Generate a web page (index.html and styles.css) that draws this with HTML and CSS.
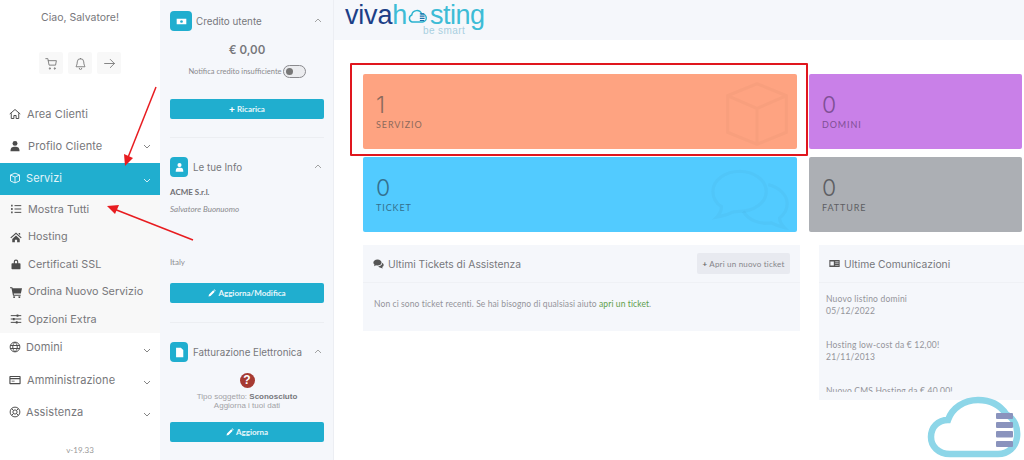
FILE: index.html
```html
<!DOCTYPE html>
<html lang="it">
<head>
<meta charset="utf-8">
<title>Viva Hosting - Area Clienti</title>
<link rel="stylesheet" href="styles.css">
</head>
<body>
<div class="app">
  <nav class="sidebar">
    <div class="hello">Ciao, Salvatore!</div>
    <div class="tools">
      <span class="tool"><svg viewBox="0 0 16 16" class="ic-t"><path d="M1 2h2.500l1.500 8h8l1-5.500H4M6 13.500a.8.800 0 1 0 .01 0M12 13.500a.8.800 0 1 0 .01 0"/></svg></span>
      <span class="tool"><svg viewBox="0 0 16 16" class="ic-t"><path d="M8 2a4 4 0 0 0-4 4c0 4-1.500 5-1.500 6h11c0-1-1.500-2-1.500-6a4 4 0 0 0-4-4zM6.500 14a1.500 1.500 0 0 0 3 0"/></svg></span>
      <span class="tool"><svg viewBox="0 0 16 16" class="ic-t"><path d="M2 8h12M9 3l5 5-5 5"/></svg></span>
    </div>
    <ul class="menu">
      <li class="item"><svg viewBox="0 0 16 16" class="ic-l"><path d="M1 8l7-6 7 6M3 7v7h3.500v-4h3v4H13V7"/></svg><span>Area Clienti</span></li>
      <li class="item profile"><svg viewBox="0 0 16 16" class="ic-s"><circle cx="8" cy="4.500" r="3.300"/><path d="M2 15c0-5 2-6 6-6s6 1 6 6z"/></svg><span class="ind">Profilo Cliente</span><svg viewBox="0 0 10 10" class="chev"><path d="M2 4l3 3 3-3"/></svg></li>
      <li class="item active"><svg viewBox="0 0 16 16" class="ic-l tight"><path d="M8 1.500l6 2.500v8l-6 2.500-6-2.500V4zM2 4l6 2.800L14 4M8 6.800v7.500"/></svg><span>Servizi</span><svg viewBox="0 0 10 10" class="chev"><path d="M2 4l3 3 3-3"/></svg></li>
      <li class="submenu">
        <div class="sub"><svg viewBox="0 0 16 16" class="ic-l"><path d="M6 3.500h9M6 8h9M6 12.500h9"/><path class="thick" d="M1.500 3.500h2M1.500 8h2M1.500 12.500h2"/></svg><span>Mostra Tutti</span></div>
        <div class="sub"><svg viewBox="0 0 16 16" class="ic-s"><path d="M8 2L.500 8.500l1 1L8 4l6.500 5.500 1-1zM3 10.500V15h3.500v-3.500h3V15H13v-4.500L8 6zM11.500 2.500h2v3l-2-1.700z"/></svg><span>Hosting</span></div>
        <div class="sub"><svg viewBox="0 0 16 16" class="ic-s"><path d="M3 7h10a1 1 0 0 1 1 1v6a1 1 0 0 1-1 1H3a1 1 0 0 1-1-1V8a1 1 0 0 1 1-1zM5 7V5a3 3 0 0 1 6 0v2h-1.500V5a1.500 1.500 0 0 0-3 0v2z"/></svg><span>Certificati SSL</span></div>
        <div class="sub"><svg viewBox="0 0 16 16" class="ic-s"><path d="M0 1.500h3l.600 1.500H16l-1.500 7H5l.300 1.500h9V13H4L2 3H0zM5.500 13.500a1.300 1.300 0 1 0 .01 0zM12.500 13.500a1.300 1.300 0 1 0 .01 0z"/></svg><span>Ordina Nuovo Servizio</span></div>
        <div class="sub"><svg viewBox="0 0 16 16" class="ic-l"><path d="M1 3.500h14M1 8h14M1 12.500h14"/><path class="thick" d="M10 2v3M5 6.500v3M9 11v3"/></svg><span>Opzioni Extra</span></div>
      </li>
      <li class="item lower domains"><svg viewBox="0 0 16 16" class="ic-l tight"><circle cx="8" cy="8" r="6.500"/><path d="M1.500 6h13M1.500 10h13M8 1.500c-4 4-4 9 0 13M8 1.500c4 4 4 9 0 13"/></svg><span>Domini</span><svg viewBox="0 0 10 10" class="chev"><path d="M2 4l3 3 3-3"/></svg></li>
      <li class="item lower"><svg viewBox="0 0 16 16" class="ic-s"><path fill-rule="evenodd" d="M1.500 2.500h13a1 1 0 0 1 1 1v9a1 1 0 0 1-1 1h-13a1 1 0 0 1-1-1v-9a1 1 0 0 1 1-1zM2 7v5h12V7zM2 4v1.200h12V4zM3.500 9h4v1h-4z"/></svg><span>Amministrazione</span><svg viewBox="0 0 10 10" class="chev"><path d="M2 4l3 3 3-3"/></svg></li>
      <li class="item lower"><svg viewBox="0 0 16 16" class="ic-l tight"><circle cx="8" cy="8" r="6.500"/><circle cx="8" cy="8" r="2.800"/><path d="M3.500 3.500l2.500 2.500M12.500 3.500L10 6M3.500 12.500L6 10M12.500 12.500L10 10"/></svg><span>Assistenza</span><svg viewBox="0 0 10 10" class="chev"><path d="M2 4l3 3 3-3"/></svg></li>
    </ul>
    <div class="version">v-19.33</div>
  </nav>

  <aside class="panel">
    <section class="block first">
      <div class="block-head">
        <span class="badge"><svg viewBox="0 0 16 16"><path fill-rule="evenodd" d="M1 4h14v8H1zM8 6a2 2 0 1 0 .01 0z"/></svg></span>
        <span class="block-title">Credito utente</span>
        <svg viewBox="0 0 10 10" class="chev up"><path d="M2 6l3-3 3 3"/></svg>
      </div>
      <div class="credit">€ 0,00</div>
      <div class="notify"><span>Notifica credito insufficiente</span><span class="toggle"><i></i></span></div>
      <div class="btn"><b>+</b> Ricarica</div>
    </section>
    <section class="block">
      <div class="block-head">
        <span class="badge narrow"><svg viewBox="0 0 16 16"><circle cx="8" cy="4.500" r="3"/><path d="M2.500 14c0-5 2-5.500 5.500-5.500s5.500.500 5.500 5.500z"/></svg></span>
        <span class="block-title">Le tue Info</span>
        <svg viewBox="0 0 10 10" class="chev up"><path d="M2 6l3-3 3 3"/></svg>
      </div>
      <div class="company">ACME S.r.l.</div>
      <div class="person">Salvatore Buonuomo</div>
      <div class="country">Italy</div>
      <div class="btn"><svg viewBox="0 0 16 16" class="pen"><path d="M1 15l1-4 8.500-8.500 3 3L5 14zM11.500 1.500l1-1 3 3-1 1z"/></svg> Aggiorna/Modifica</div>
    </section>
    <section class="block last">
      <div class="block-head">
        <span class="badge narrow"><svg viewBox="0 0 16 16"><path d="M3 1h7l3.500 3.500V15H3z"/></svg></span>
        <span class="block-title">Fatturazione Elettronica</span>
        <svg viewBox="0 0 10 10" class="chev up"><path d="M2 6l3-3 3 3"/></svg>
      </div>
      <div class="question">?</div>
      <div class="subject">Tipo soggetto: <strong>Sconosciuto</strong><br>Aggiorna i tuoi dati</div>
      <div class="btn"><svg viewBox="0 0 16 16" class="pen"><path d="M1 15l1-4 8.500-8.500 3 3L5 14zM11.500 1.500l1-1 3 3-1 1z"/></svg> Aggiorna</div>
    </section>
  </aside>

  <main class="main">
    <header class="top">
      <div class="logo">
        <span class="viva">viva</span><span class="host">h</span><svg class="logo-cloud" viewBox="0 0 30 20"><path d="M7 17.500a5 5 0 0 1-.500-9.500 7 7 0 0 1 13.500-1.500 5.500 5.500 0 0 1 1.500 11z"/><path class="bars" d="M17.500 6.500h6M17.500 9.500h6.500M17.500 12.500h6.500M17.500 15.500h6"/></svg><span class="host sting">sting</span>
        <span class="smart">be smart</span>
      </div>
    </header>
    <div class="content">
      <div class="stats">
        <div class="stat orange">
          <div class="num">1</div><div class="lbl">SERVIZIO</div>
          <svg class="wm" viewBox="0 0 72 72"><path d="M36 3l32 13v40L36 69 4 56V16zM4 16l32 14 32-14M36 30v39"/></svg>
        </div>
        <div class="stat purple"><div class="num">0</div><div class="lbl">DOMINI</div></div>
        <div class="stat blue">
          <div class="num">0</div><div class="lbl">TICKET</div>
          <svg class="wm wm-chat" viewBox="0 0 84 64"><path d="M30 3c15 0 28 9 28 21s-13 21-28 21c-4 0-7 0-10 2-4 2-9 3-14 4 3-3 5-7 5-11C5 36 2 30 2 24 2 12 15 3 30 3z"/><path d="M60 17c12 3 20 11 20 20 0 6-3 11-8 15 0 4 2 7 5 10-5-1-10-3-14-5-12 2-24-3-29-12"/></svg>
        </div>
        <div class="stat grey"><div class="num">0</div><div class="lbl">FATTURE</div></div>
      </div>
      <div class="lists">
        <section class="card tickets">
          <div class="card-head">
            <svg viewBox="0 0 16 16" class="ic-s"><path d="M6.500 2C3 2 .500 4 .500 6.500c0 1.300.700 2.400 1.700 3.200L1.500 12l3-1.300c.600.200 1.300.300 2 .300 3.500 0 6-2 6-4.500S10 2 6.500 2z"/><path d="M13.500 7c0 3-2.500 5-6 5.500.800 1 2.200 1.500 3.500 1.500l3 1.300-.500-2.300c1.200-.800 2-1.800 2-3 0-1.100-.800-2.200-2-3z"/></svg>
            <span class="card-title">Ultimi Tickets di Assistenza</span>
            <span class="open"><b>+</b> Apri un nuovo ticket</span>
          </div>
          <p class="card-text">Non ci sono ticket recenti. Se hai bisogno di qualsiasi aiuto <a class="link">apri un ticket</a>.</p>
        </section>
        <section class="card news">
          <div class="card-head">
            <svg viewBox="0 0 16 16" class="ic-s"><path fill-rule="evenodd" d="M.500 3h15v10H.500zM2 5v6h5V5zM9 5v1h5V5zM9 7.500v1h5v-1zM9 10v1h5v-1z"/></svg>
            <span class="card-title">Ultime Comunicazioni</span>
          </div>
          <div class="news-list">
            <p>Nuovo listino domini<br>05/12/2022</p>
            <p>Hosting low-cost da € 12,00!<br>21/11/2013</p>
            <p>Nuovo CMS Hosting da € 40,00!</p>
          </div>
        </section>
      </div>
    </div>
  </main>

  <div class="highlight"></div>
  <svg class="arrows" viewBox="0 0 1024 460">
    <path d="M156 87L127 160"/><polygon points="125,166 124,154 133,158"/>
    <path d="M193 240L114 209"/><polygon points="107,206 119,205 115,214"/>
  </svg>
  <svg class="cloud-mark" viewBox="0 0 96 66">
    <path class="outline" d="M24 60C12 60 5 52 5 43 5 33 12 26 22 26 26 14 38 6 52 6 64 6 74 11 80 20 89 25 92 34 91 43 90 53 82 60 72 60z"/>
    <rect x="70" y="19" width="17" height="6" rx="1"/><rect x="70" y="28" width="17" height="6" rx="1"/><rect x="70" y="37" width="17" height="6.500" rx="1"/><rect x="70" y="47" width="17" height="6" rx="1"/>
  </svg>
</div>
</body>
</html>
```
FILE: styles.css
```css
* { box-sizing: border-box; }
html, body { margin: 0; height: 460px; overflow: hidden; background: #fff; }
body { font-family: "Inter", "Liberation Sans", sans-serif; color: #6b6b6f; }
svg { flex: none; display: block; }

.app { position: relative; display: flex; width: 1024px; height: 460px; overflow: hidden; }

/* Sidebar */
.sidebar { width: 160px; flex: none; background: #fff; display: flex; flex-direction: column; }
.hello { text-align: center; font-size: 10.500px; line-height: 14px; padding-top: 11px; color: #77777b; }
.tools { display: flex; justify-content: center; gap: 5px; margin-top: 27px; }
.tool { width: 24px; height: 22px; background: #f8f8f8; border-radius: 2px; display: flex; align-items: center; justify-content: center; }
.ic-t { width: 13px; height: 13px; fill: none; stroke: #777; stroke-width: 1.100; stroke-linecap: round; stroke-linejoin: round; }
.ic-l { width: 12px; height: 12px; margin-right: 6px; fill: none; stroke: #4c4c4c; stroke-width: 1.300; }
.ic-s { width: 12px; height: 12px; margin-right: 6px; fill: #4c4c4c; }
.ic-l.tight { margin-right: 5px; }
.thick { stroke-width: 2.400; }
.menu { list-style: none; margin: 25px 0 0; padding: 0; }
.item { display: flex; align-items: center; height: 32px; padding-left: 9px; padding-right: 8px; font-size: 11px; letter-spacing: .1px; color: #77777b; }
.item span { flex: 1; }
.item span, .item > svg:first-child { margin-bottom: 2px; }
.item .ind { padding-left: 1px; }
.chev { width: 10px; height: 10px; fill: none; stroke: #777; stroke-width: .9; }
.profile .chev { margin-bottom: 2px; }
.active { background: #20aecf; color: #e4f5fa; height: 32px; }
.active .ic-l { stroke: #e4f5fa; }
.active .chev { stroke: #e4f5fa; margin-top: 2px; }
.lower .chev { margin-top: 2px; }
.domains span, .domains > svg:first-child { margin-bottom: 4px; }
.submenu { background: #f8f8f8; padding: 0 0 0 10px; height: 138px; }
.sub { display: flex; align-items: center; height: 27.500px; font-size: 10.800px; color: #77777b; letter-spacing: .05px; }
.sub:first-child { height: 28px; }
.version { text-align: center; font-size: 8px; color: #999; margin-top: 16px; font-family: "Lato", sans-serif; }

/* Panel */
.panel { width: 174px; flex: none; background: #f5f7fb; padding: 0 9px 0 10px; border-right: 1px solid #eceef3; }
.block { border-bottom: 1px solid #eceef2; padding-top: 19px; padding-bottom: 19px; }
.block.first { padding-top: 11px; padding-bottom: 18px; }
.block.last { border: 0; }
.block-head { display: flex; align-items: center; height: 20px; }
.badge { width: 22px; height: 20px; background: #20aecf; border-radius: 4px; display: flex; align-items: center; justify-content: center; margin-right: 4px; }
.badge.narrow { width: 18px; margin-right: 5px; }
.badge svg { width: 11px; height: 11px; fill: #fff; }
.block-title { flex: 1; font-size: 9.800px; color: #77777b; white-space: nowrap; }
.chev.up { stroke: #999; margin-right: 1px; }
.credit { text-align: center; font-size: 11.500px; font-weight: 600; line-height: 14px; margin-top: 12px; color: #77777b; }
.notify { display: flex; justify-content: center; align-items: center; gap: 1px; margin-top: 7px; height: 14px; font-family: "Lato", sans-serif; font-size: 7.500px; color: #8a8a8e; white-space: nowrap; }
.toggle { display: block; width: 23px; height: 13px; border: 1px solid #8a8a8e; border-radius: 7px; padding: 2px; background: #ebecef; }
.toggle i { display: block; width: 7px; height: 7px; border-radius: 50%; background: #777; }
.btn { display: flex; justify-content: center; align-items: center; gap: 2px; height: 20px; background: #20aecf; border-radius: 2px; margin-top: 21px; color: #e8f7fb; font-family: "Lato", sans-serif; font-size: 8px; font-weight: 700; }
.btn b { font-size: 10px; line-height: 1; color: #fff; }
.pen { width: 8px; height: 8px; fill: #fff; }
.company { font-family: "Lato", sans-serif; font-size: 8px; font-weight: 700; color: #6f6f73; margin-top: 10px; line-height: 10px; }
.person { font-family: "Lato", sans-serif; font-size: 8px; font-style: italic; color: #8a8a8e; margin-top: 7px; line-height: 10px; }
.country { font-family: "Lato", sans-serif; font-size: 8px; color: #8f8f93; margin-top: 43px; line-height: 10px; }
.block .country + .btn { margin-top: 16px; }
.question { width: 15px; height: 15px; border-radius: 50%; background: #a63a32; color: #fff; font: 700 12px/15px "Liberation Sans", sans-serif; text-align: center; margin: 11px auto 0; }
.subject { text-align: center; font-family: "Liberation Sans", sans-serif; font-size: 8px; line-height: 9px; color: #a2a2a6; margin-top: 4px; }
.subject strong { color: #77777b; }
.subject + .btn { margin-top: 12px; }

/* Main */
.main { flex: 1; min-width: 0; display: flex; flex-direction: column; }
.top { height: 40px; background: #f5f7fb; flex: none; padding: 0 0 0 11px; }
.logo { position: relative; display: flex; align-items: baseline; width: 145px; font-family: "Liberation Sans", sans-serif; font-size: 27px; line-height: 31px; letter-spacing: -.2px; }
.viva { color: #1c3f87; }
.host { color: #3dbcd6; }
.sting { letter-spacing: -.5px; margin-left: 1px; }
.logo-cloud { width: 22px; height: 15px; align-self: flex-start; margin: 9px 0 0 0; fill: none; stroke: #2ab3cf; stroke-width: 2; }
.logo-cloud .bars { stroke: #1c6fa8; stroke-width: 1.600; }
.smart { position: absolute; left: 78px; top: 25px; font-size: 10px; line-height: 11px; letter-spacing: .4px; color: #a8cfe0; }
.content { padding: 34px 0 0 29px; flex: 1; min-height: 0; display: flex; flex-direction: column; }
.stats { display: grid; grid-template-columns: 434px 213px; gap: 8px 12px; }
.stat { position: relative; height: 75px; border-radius: 2px; padding: 19px 13px 0; overflow: hidden; }
.orange { background: #fea381; color: #8d6a5c; }
.purple { background: #c980e8; color: #7f4f95; }
.blue { background: #52cbff; color: #34708e; }
.grey { background: #acafb4; color: #5d5e63; }
.num { font-family: "Inter", sans-serif; font-weight: 300; font-size: 23px; line-height: 24px; }
.lbl { font-family: "Lato", sans-serif; font-size: 9px; line-height: 12px; letter-spacing: .9px; margin-top: 2px; font-weight: 400; }
.wm { position: absolute; right: 7px; top: 7px; width: 66px; height: 66px; fill: none; stroke: #000; stroke-opacity: .022; stroke-width: 3.500; }
.wm-chat { right: 6px; top: 11px; width: 80px; height: 62px; }
.lists { display: grid; grid-template-columns: 437px 205px; column-gap: 19px; margin-top: 13px; align-items: start; }
.card { background: #f5f7fb; overflow: hidden; }
.tickets { height: 86px; }
.news { height: 155px; }
.card-head { display: flex; align-items: center; height: 38px; padding: 0 10px; border-bottom: 1px solid #eff1f5; }
.card-head .ic-s { width: 11px; height: 11px; margin-right: 4px; fill: #555; }
.card-title { flex: 1; font-size: 10.300px; color: #77777b; white-space: nowrap; }
.news .card-title { padding-left: 0; }
.open { width: 93px; height: 21px; background: #e8eaf0; border-radius: 2px; display: flex; align-items: center; justify-content: center; gap: 2px; font-family: "Lato", sans-serif; font-size: 8px; color: #85858a; letter-spacing: .2px; }
.open b { color: #666; }
.card-text { margin: 16px 0 0 11px; font-family: "Lato", sans-serif; font-size: 8.500px; line-height: 11px; letter-spacing: .1px; color: #94949a; }
.link { color: #5e9e4a; }
.news-list { height: 109px; overflow: hidden; padding: 10px 0 0 7px; font-family: "Lato", sans-serif; font-size: 8.500px; line-height: 12px; color: #94949a; letter-spacing: .2px; }
.news-list p { margin: 0 0 22px; }

/* Overlays */
.highlight { position: absolute; left: 350px; top: 63px; width: 458px; height: 93px; border: 2px solid #e0161e; border-radius: 1px; pointer-events: none; }
.arrows { position: absolute; left: 0; top: 0; width: 1024px; height: 460px; pointer-events: none; fill: #e81c20; }
.arrows path { fill: none; stroke: #e81c20; stroke-width: 1.500; }
.cloud-mark { position: absolute; left: 926px; top: 394px; width: 96px; height: 66px; fill: #8a93bd; }
.cloud-mark .outline { fill: none; stroke: #8dd6e8; stroke-width: 6.500; }
```
